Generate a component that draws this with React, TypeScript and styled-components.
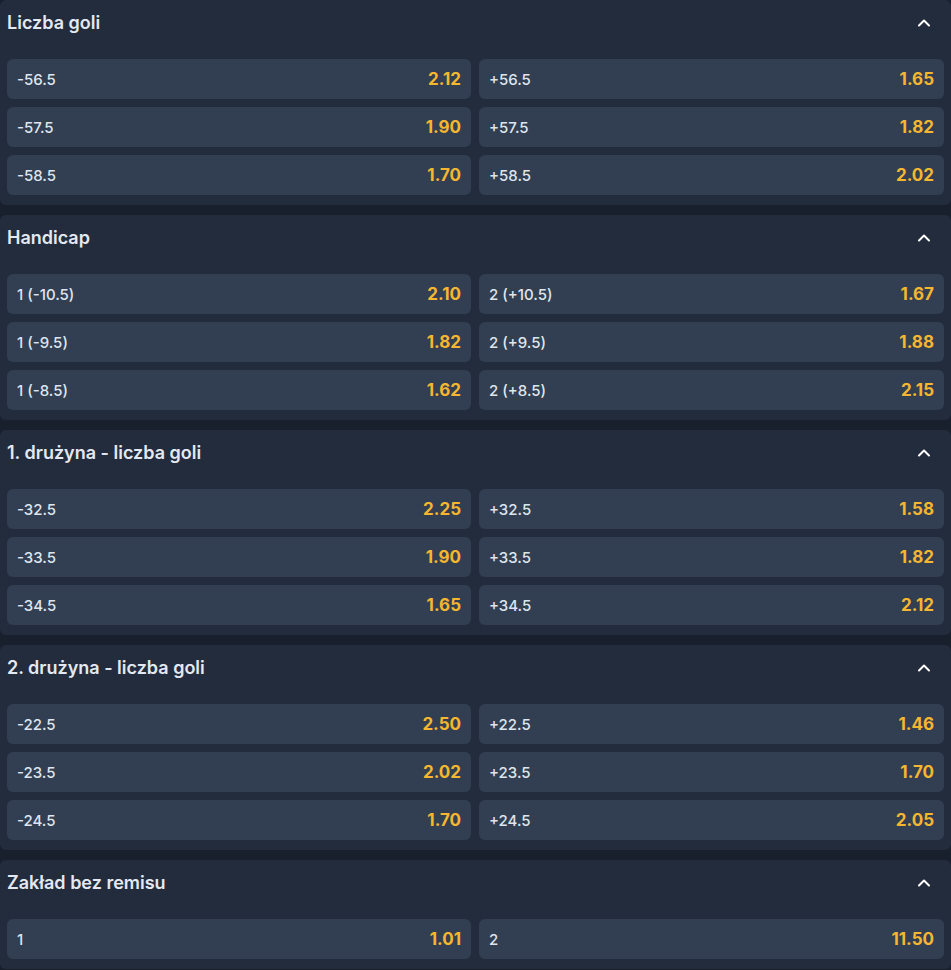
import React from "react";
import styled, { createGlobalStyle } from "styled-components";

const Global = createGlobalStyle`
  html, body { margin: 0; padding: 0; background: #18202d; }
  body { font-family: Inter, "Noto Sans", "Liberation Sans", sans-serif; }
  * { box-sizing: border-box; }
`;

const Page = styled.div`
  width: 951px;
  display: flex;
  flex-direction: column;
  gap: 10px;
  padding-bottom: 3px;
`;

const Panel = styled.section`
  background: #222c3d;
  border-radius: 6px;
  padding: 0 7px 10px 7px;
  width: 951px;
`;

const Header = styled.div`
  height: 59px;
  display: flex;
  align-items: flex-start;
  justify-content: space-between;
  padding-top: 12px;
`;

const Title = styled.h2`
  margin: 0;
  font-size: 18px;
  line-height: 22px;
  font-weight: 600;
  color: #e4e9f1;
`;

const Chevron = styled.svg`
  margin-top: 6px;
  margin-right: 13px;
  width: 14px;
  height: 9px;
`;

const Grid = styled.div`
  display: grid;
  grid-template-columns: 464px 1fr;
  column-gap: 8px;
  row-gap: 8px;
`;

const Button = styled.div`
  height: 40px;
  border-radius: 6px;
  background: #323f52;
  display: flex;
  align-items: center;
  justify-content: space-between;
  padding: 0 10px;
`;

const Label = styled.span`
  font-size: 15px;
  font-weight: 500;
  color: #dfe5ee;
`;

const Odd = styled.span`
  font-size: 17px;
  font-weight: 700;
  color: #f6b62f;
`;

type Market = { title: string; rows: [string, string][] };

const markets: Market[] = [
  {
    title: "Liczba goli",
    rows: [
      ["-56.5", "2.12"], ["+56.5", "1.65"],
      ["-57.5", "1.90"], ["+57.5", "1.82"],
      ["-58.5", "1.70"], ["+58.5", "2.02"],
    ],
  },
  {
    title: "Handicap",
    rows: [
      ["1 (-10.5)", "2.10"], ["2 (+10.5)", "1.67"],
      ["1 (-9.5)", "1.82"], ["2 (+9.5)", "1.88"],
      ["1 (-8.5)", "1.62"], ["2 (+8.5)", "2.15"],
    ],
  },
  {
    title: "1. drużyna - liczba goli",
    rows: [
      ["-32.5", "2.25"], ["+32.5", "1.58"],
      ["-33.5", "1.90"], ["+33.5", "1.82"],
      ["-34.5", "1.65"], ["+34.5", "2.12"],
    ],
  },
  {
    title: "2. drużyna - liczba goli",
    rows: [
      ["-22.5", "2.50"], ["+22.5", "1.46"],
      ["-23.5", "2.02"], ["+23.5", "1.70"],
      ["-24.5", "1.70"], ["+24.5", "2.05"],
    ],
  },
  {
    title: "Zakład bez remisu",
    rows: [
      ["1", "1.01"], ["2", "11.50"],
    ],
  },
];

export default function App() {
  return (
    <>
      <Global />
      <Page>
        {markets.map((m) => (
          <Panel key={m.title}>
            <Header>
              <Title>{m.title}</Title>
              <Chevron viewBox="0 0 14 9" fill="none">
                <path d="M2 7.5 L7 2.5 L12 7.5" stroke="#ffffff" strokeWidth="2" strokeLinecap="round" strokeLinejoin="round" />
              </Chevron>
            </Header>
            <Grid>
              {m.rows.map(([l, o], i) => (
                <Button key={i}>
                  <Label>{l}</Label>
                  <Odd>{o}</Odd>
                </Button>
              ))}
            </Grid>
          </Panel>
        ))}
      </Page>
    </>
  );
}
